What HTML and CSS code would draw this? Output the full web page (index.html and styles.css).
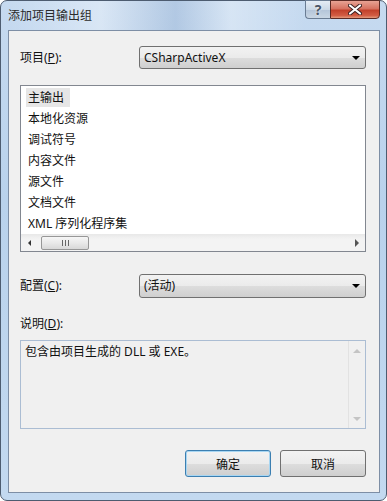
FILE: index.html
```html
<!DOCTYPE html>
<html lang="zh-CN">
<head>
    <meta charset="UTF-8">
    <meta name="viewport" content="width=device-width, initial-scale=1.0">
    <title>添加项目输出组</title>
    <link rel="stylesheet" href="styles.css">
</head>
<body>
<div class="window">
    <div class="titlebar">
        <span class="title">添加项目输出组</span>
        <div class="caption-buttons">
            <span class="cap-btn help">?</span>
            <span class="cap-btn close">
                <svg width="14" height="11" viewBox="0 0 14 11">
                    <path d="M2 1.5 L12 9.5 M12 1.5 L2 9.5" stroke="#3a2020" stroke-width="4" stroke-linecap="round"/>
                    <path d="M2 1.5 L12 9.5 M12 1.5 L2 9.5" stroke="#fff" stroke-width="2.2" stroke-linecap="round"/>
                </svg>
            </span>
        </div>
    </div>

    <div class="client">
        <div class="row">
            <label class="label">项目(<u>P</u>):</label>
            <div class="combo">
                <span class="combo-text">CSharpActiveX</span>
                <span class="combo-arrow"></span>
            </div>
        </div>

        <div class="listbox">
            <ul class="items">
                <li><span class="selected">主输出</span></li>
                <li>本地化资源</li>
                <li>调试符号</li>
                <li>内容文件</li>
                <li>源文件</li>
                <li>文档文件</li>
                <li>XML 序列化程序集</li>
            </ul>
            <div class="hscroll">
                <span class="arrow-left"></span>
                <div class="track">
                    <div class="thumb"><span class="grip"></span></div>
                </div>
                <span class="arrow-right"></span>
            </div>
        </div>

        <div class="row config">
            <label class="label">配置(<u>C</u>):</label>
            <div class="combo">
                <span class="combo-text">(活动)</span>
                <span class="combo-arrow"></span>
            </div>
        </div>

        <div class="desc-label">说明(<u>D</u>):</div>
        <div class="desc">
            <p class="desc-text">包含由项目生成的 DLL 或 EXE。</p>
            <div class="vscroll">
                <span class="arrow-up"></span>
                <span class="arrow-down"></span>
            </div>
        </div>

        <div class="actions">
            <button class="btn default">确定</button>
            <button class="btn">取消</button>
        </div>
    </div>
</div>
</body>
</html>
```

FILE: styles.css
```css
body {
    margin: 0;
    padding: 0;
    background: #fff;
    font-family: "Noto Sans", "Noto Sans CJK SC", sans-serif;
    font-size: 12px;
    color: #111;
}

.window {
    width: 387px;
    height: 501px;
    box-sizing: border-box;
    display: flex;
    flex-direction: column;
    padding: 0 6px 7px 7px;
    border: 1px solid #4d5c70;
    border-radius: 7px;
    background: linear-gradient(180deg, #c6daf0 0%, #b9d2ec 40%, #c3d9f0 100%);
}

.titlebar {
    height: 29px;
    display: flex;
    justify-content: space-between;
    align-items: flex-start;
    background: linear-gradient(90deg, rgba(255,255,255,0) 0%, rgba(255,255,255,0.35) 25%, rgba(120,150,190,0.25) 45%, rgba(255,255,255,0.3) 60%, rgba(255,255,255,0) 80%);
}

.title {
    margin-top: 7px;
    line-height: 16px;
    color: #2a2a2a;
}

.caption-buttons {
    display: flex;
    margin-top: -1px;
}

.cap-btn {
    height: 19px;
    box-sizing: border-box;
    display: flex;
    align-items: center;
    justify-content: center;
}

.help {
    width: 25px;
    border: 1px solid #6a7c93;
    border-right: none;
    border-radius: 0 0 0 4px;
    background: linear-gradient(180deg, #e4ecf5 0%, #cbd8e6 50%, #b3c4d8 51%, #c9d6e4 100%);
    color: #4a5566;
    font-size: 14px;
    font-weight: bold;
    text-shadow: 0 0 2px #fff;
}

.close {
    width: 50px;
    border: 1px solid #5b2a24;
    border-radius: 0 0 4px 0;
    background: linear-gradient(180deg, #e8a394 0%, #d77361 45%, #c2412b 55%, #d25c43 85%, #e49a7c 100%);
}

.client {
    flex: 1;
    display: flex;
    flex-direction: column;
    padding: 15px 13px 0 11px;
    background: #f0f0f0;
    border: 1px solid #7d8ea5;
}

.row {
    display: flex;
    align-items: center;
    height: 23px;
}

.row .label {
    width: 119px;
    line-height: 16px;
}

.combo {
    flex: 1;
    height: 100%;
    box-sizing: border-box;
    display: flex;
    align-items: center;
    justify-content: space-between;
    padding: 0 4px 0 4px;
    border: 1px solid #707070;
    border-radius: 3px;
    background: linear-gradient(180deg, #f2f2f2 0%, #ebebeb 50%, #dddddd 51%, #cfcfcf 100%);
}

.combo-text {
    line-height: 16px;
}

.combo-arrow {
    width: 0;
    height: 0;
    border-left: 4px solid transparent;
    border-right: 4px solid transparent;
    border-top: 4px solid #000;
    margin-right: 1px;
}

.listbox {
    margin-top: 16px;
    height: 167px;
    box-sizing: border-box;
    display: flex;
    flex-direction: column;
    border: 1px solid #828790;
    background: #fff;
}

.items {
    flex: 1;
    list-style: none;
    margin: 0;
    padding: 1px 0 0 5px;
    overflow: hidden;
}

.items li {
    height: 21px;
    line-height: 21px;
    padding-left: 2px;
}

.items li .selected {
    display: inline-block;
    margin-left: -2px;
    padding: 0 6px 0 2px;
    line-height: 19px;
    margin-top: 1px;
    background: #e6e6e6;
}

.hscroll {
    height: 17px;
    display: flex;
    align-items: center;
    background: linear-gradient(180deg, #e8e8e8 0%, #f3f3f3 30%, #f3f3f3 100%);
}

.arrow-left,
.arrow-right {
    width: 17px;
    display: flex;
    justify-content: center;
}

.arrow-left::before {
    content: "";
    border-top: 3px solid transparent;
    border-bottom: 3px solid transparent;
    border-right: 3px solid #333;
}

.arrow-right::before {
    content: "";
    border-top: 4px solid transparent;
    border-bottom: 4px solid transparent;
    border-left: 4px solid #555;
}

.track {
    flex: 1;
    height: 100%;
    display: flex;
    align-items: center;
}

.thumb {
    margin-left: 3px;
    width: 48px;
    height: 14px;
    box-sizing: border-box;
    display: flex;
    align-items: center;
    justify-content: center;
    border: 1px solid #979797;
    border-radius: 2px;
    background: linear-gradient(180deg, #f6f6f6 0%, #e9e9e9 50%, #d8d8d8 100%);
}

.grip {
    width: 7px;
    height: 6px;
    background: repeating-linear-gradient(90deg, #666 0 1px, transparent 1px 3px);
}

.config {
    margin-top: 22px;
    height: 24px;
}

.desc-label {
    margin-top: 17px;
    line-height: 18px;
}

.desc {
    margin-top: 7px;
    height: 89px;
    box-sizing: border-box;
    display: flex;
    border: 1px solid #abbdd3;
    background: #f0f0f0;
}

.desc-text {
    flex: 1;
    margin: 0;
    padding: 3px 4px;
    line-height: 16px;
}

.vscroll {
    width: 16px;
    display: flex;
    flex-direction: column;
    justify-content: space-between;
    align-items: center;
    padding: 8px 0 7px 0;
    border-left: 1px solid #e2e2e2;
}

.arrow-up,
.arrow-down {
    width: 0;
    height: 0;
    border-left: 4px solid transparent;
    border-right: 4px solid transparent;
}

.arrow-up {
    border-bottom: 4px solid #c4c4c4;
}

.arrow-down {
    border-top: 4px solid #c4c4c4;
}

.actions {
    margin-top: 21px;
    display: flex;
    justify-content: flex-end;
    gap: 9px;
}

.btn {
    width: 86px;
    height: 27px;
    padding: 0;
    font-family: "Noto Sans", "Noto Sans CJK SC", sans-serif;
    font-size: 12px;
    color: #111;
    border: 1px solid #707070;
    border-radius: 3px;
    background: linear-gradient(180deg, #f2f2f2 0%, #ebebeb 50%, #dddddd 51%, #cfcfcf 100%);
}

.btn.default {
    border-color: #3c7fb1;
    box-shadow: inset 0 0 0 1px #a8d6f2;
}
```
